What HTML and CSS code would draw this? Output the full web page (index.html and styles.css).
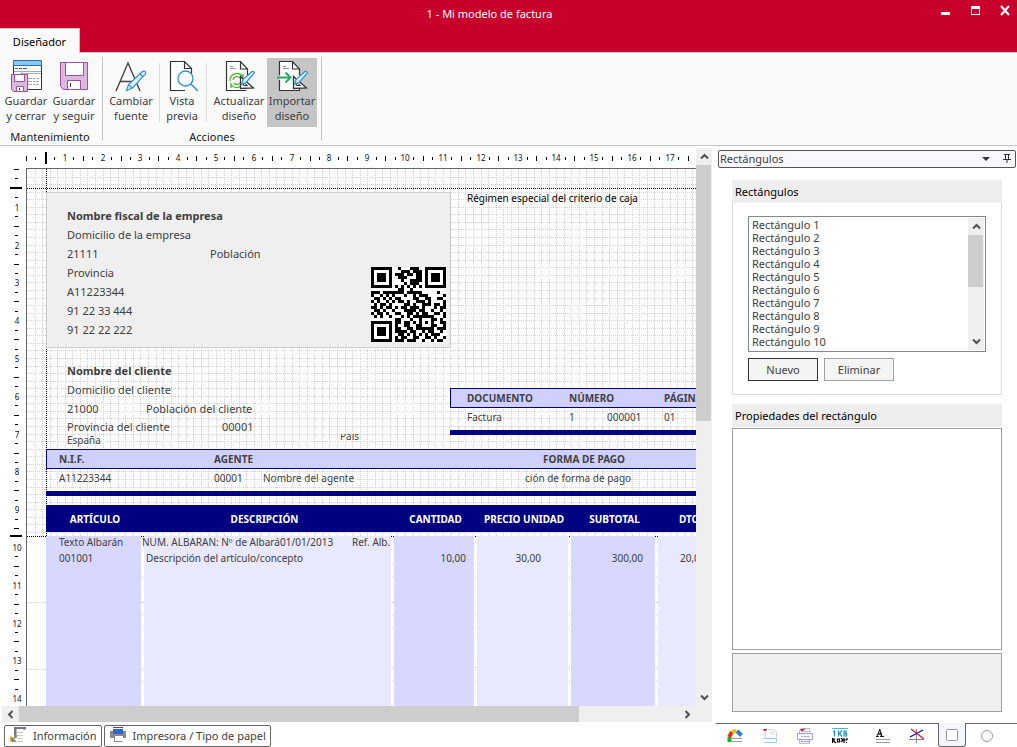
FILE: index.html
```html
<!DOCTYPE html>
<html lang="es">
<head>
<meta charset="utf-8">
<title>1 - Mi modelo de factura</title>
<link rel="stylesheet" href="styles.css">
</head>
<body>
<div class="app">
  <header class="titlebar">
    <h1 class="title">1 - Mi modelo de factura</h1>
    <div class="window-controls">
      <button type="button" aria-label="Minimizar"><svg width="16" height="20"><path d="M4 13.500h9" stroke="#fff" stroke-width="3"/></svg></button>
      <button type="button" aria-label="Maximizar"><svg width="16" height="20"><path d="M4 6h9v9H4z M5 9v5h7V9z" fill="#fff" fill-rule="evenodd"/></svg></button>
      <button type="button" aria-label="Cerrar"><svg width="16" height="20"><path d="M4 6l8 9M12 6l-8 9" stroke="#fff" stroke-width="2"/></svg></button>
    </div>
  </header>
  <nav class="tabs"><a class="tab" href="#ribbon">Diseñador</a></nav>

  <section class="ribbon" id="ribbon">
    <div class="group group-maint">
      <div class="tools">
        <button type="button" class="tool">
          <svg width="32" height="32" viewBox="0 0 32 32" fill="none">
            <path d="M3.500 1.500h28v28h-28z" fill="#fff" stroke="#333"/>
            <path d="M3.500 0.500h28v5h-28z" fill="#92c5ec" stroke="#1b75bc"/>
            <path d="M5 8.500h3M9 8.500h3M13 8.500h4" stroke="#555"/>
            <path d="M4 11.500h27M11.500 11v4M11 13.500h20M18 18.500h4M23 18.500h2M26 18.500h3M18 21.500h4M23 21.500h2M26 21.500h3M18 24.500h4M23 24.500h2M26 24.500h3" stroke="#aaa"/>
            <path d="M1.500 14.500h16v17h-14l-2-2z" fill="#dcb8dc" stroke="#9c4f9f"/>
            <path d="M4.500 14.500h10v7h-10zM6.500 26.500h7v5h-7z" fill="#fff" stroke="#9c4f9f"/>
            <path d="M9.500 28v2" stroke="#333"/>
          </svg>
          <span>Guardar<br>y cerrar</span>
        </button>
        <button type="button" class="tool">
          <svg width="32" height="32" viewBox="0 0 32 32" fill="none">
            <path d="M2.500 2.500h27v27h-24l-3-3z" fill="#dcb8dc" stroke="#9c4f9f"/>
            <path d="M7.500 2.500h18v13h-18zM9.500 20.500h13v9h-13z" fill="#fff" stroke="#9c4f9f"/>
            <path d="M12.500 23v4" stroke="#333"/>
          </svg>
          <span>Guardar<br>y seguir</span>
        </button>
      </div>
      <h2 class="caption">Mantenimiento</h2>
    </div>
    <div class="group group-actions">
      <div class="tools">
        <button type="button" class="tool">
          <svg width="32" height="32" viewBox="0 0 32 32" fill="none">
            <path d="M1 31L13 3l12 28M5 21.500h17" stroke="#444" stroke-width="1.400"/>
            <path d="M27.500 11.500l-14 13-2 6 6-2.500 13-14a2 2 0 0 0-3-2.500zM13.500 24.500l3.500 3.500M25 14l3 3" fill="#dff0fb" stroke="#3092d2" stroke-width="1.200"/>
          </svg>
          <span>Cambiar<br>fuente</span>
        </button>
        <i class="rule"></i>
        <button type="button" class="tool tool-narrow">
          <svg width="32" height="32" viewBox="0 0 32 32" fill="none">
            <path d="M19 30.500H4.500v-29h14l7 7v5M18.500 1.500v7h7" fill="#fff" stroke="#333" stroke-width="1.200"/>
            <circle cx="19.500" cy="18.500" r="7.500" fill="#fff" stroke="#3092d2" stroke-width="1.300"/><path d="M25 24l7 7" stroke="#3092d2" stroke-width="1.500"/>
          </svg>
          <span>Vista<br>previa</span>
        </button>
        <i class="rule rule-late"></i>
        <button type="button" class="tool tool-wide">
          <svg width="32" height="32" viewBox="0 0 32 32" fill="none">
            <path d="M3.500 1.500h14l7 7.500v21.500h-21z" fill="#fff"/>
            <path d="M24.500 15v-6l-7-7.500h-14v29h20M17.500 1.500v7.500h7" stroke="#333" stroke-width="1.200"/>
            <path d="M7 6.500h3M7 8.500h6" stroke="#999"/>
            <path d="M7 21a7 7 0 0 1 13-4v-3M21 20a7 7 0 0 1-13 4v4M10 20a4 4 0 0 1 7-2M18 22a4 4 0 0 1-7 1" stroke="#58ad3c" stroke-width="1.300"/>
            <path d="M17.500 16.500v12l13-.500z" fill="#fff" stroke="#333" stroke-width="1.300"/><path d="M20.500 22.500v3h4z" stroke="#333"/>
            <path d="M29 11.500l-9 8-1.500 5 4.500-2 8-9a1.500 1.500 0 0 0-2-2z" fill="#dff0fb" stroke="#3092d2" stroke-width="1.300"/>
          </svg>
          <span>Actualizar<br>diseño</span>
        </button>
        <button type="button" class="tool tool-active">
          <svg width="32" height="32" viewBox="0 0 32 32" fill="none">
            <path d="M4 2h12l7 7v21H4z" fill="#fff"/>
            <path d="M3.500 15V1.500h13l7 7.500v6M3.500 20v10.500h20v-2M16.500 1.500v7.500h7" stroke="#333" stroke-width="1.200"/>
            <path d="M7 6.500h3M7 8.500h6" stroke="#999"/>
            <path d="M1 17.500h13M9.500 12.500l5 5-5 5" stroke="#2fa866" stroke-width="2"/>
            <path d="M17.500 16.500v12l13-.500z" fill="#fff" stroke="#333" stroke-width="1.300"/><path d="M20.500 22.500v3h4z" stroke="#333"/>
            <path d="M29 11.500l-9 8-1.500 5 4.500-2 8-9a1.500 1.500 0 0 0-2-2z" fill="#dff0fb" stroke="#3092d2" stroke-width="1.300"/>
          </svg>
          <span>Importar<br>diseño</span>
        </button>
      </div>
      <h2 class="caption">Acciones</h2>
    </div>
  </section>

  <main class="workspace">
    <section class="editor">
      <div class="ruler ruler-h" aria-hidden="true"><svg id="ruler-h" width="100%" height="22"></svg></div>
      <div class="ruler ruler-v" aria-hidden="true"><svg id="ruler-v" width="26" height="100%"></svg></div>
      <div class="paper">
        <svg class="grid" id="grid" width="2400" height="1600"></svg>
        <i class="guide guide-top"></i><i class="guide guide-left"></i><i class="guide guide-detail"></i>
        <div class="company">
          <p class="strong">Nombre fiscal de la empresa</p>
          <p>Domicilio de la empresa</p>
          <p class="pair pair-wide"><span>21111</span><span>Población</span></p>
          <p>Provincia</p>
          <p>A11223344</p>
          <p>91 22 33 444</p>
          <p>91 22 22 222</p>
          <svg class="qr" id="qr" viewBox="0 0 25 25"></svg>
        </div>
        <p class="regime">Régimen especial del criterio de caja</p>
        <div class="client">
          <p class="strong">Nombre del cliente</p>
          <p>Domicilio del cliente</p>
          <p class="pair pair-town"><span>21000</span><span>Población del cliente</span></p>
          <p class="pair pair-code"><span>Provincia del cliente</span><span>00001</span></p>
          <p class="country">España</p>
        </div>
        <p class="country-label"><span>País</span></p>
        <table class="strip strip-doc">
          <colgroup><col class="c119"><col class="c38"><col class="c57"><col class="c119"></colgroup>
          <thead><tr><th>DOCUMENTO</th><th colspan="2">NÚMERO</th><th>PÁGINA</th></tr></thead>
          <tbody><tr><td>Factura</td><td>1</td><td>000001</td><td>01</td></tr></tbody>
        </table>
        <table class="strip strip-agent">
          <colgroup><col class="c168"><col class="c49"><col class="c262"><col class="c400"></colgroup>
          <thead><tr><th>N.I.F.</th><th colspan="2">AGENTE</th><th class="payment">FORMA DE PAGO</th></tr></thead>
          <tbody><tr><td>A11223344</td><td>00001</td><td>Nombre del agente</td><td>ción de forma de pago</td></tr></tbody>
        </table>
        <table class="items">
          <colgroup><col class="c98"><col class="c250"><col class="c83"><col class="c94"><col class="c87"><col class="c90"></colgroup>
          <thead><tr><th>ARTÍCULO</th><th class="description">DESCRIPCIÓN</th><th>CANTIDAD</th><th>PRECIO UNIDAD</th><th>SUBTOTAL</th><th class="discount">DTO. %</th></tr></thead>
          <tbody>
            <tr class="first"><td>Texto Albarán</td><td class="note"><div><span>NUM. ALBARAN: Nº de Albará</span><span>01/01/2013</span><span>Ref. Alb.</span></div></td><td></td><td></td><td></td><td></td></tr>
            <tr class="second"><td>001001</td><td>Descripción del artículo/concepto</td><td class="num">10,00</td><td class="num price">30,00</td><td class="num subtotal">300,00</td><td class="rate">20,00</td></tr>
            <tr class="rest"><td></td><td></td><td></td><td></td><td></td><td></td></tr>
          </tbody>
        </table>
      </div>
      <div class="vscroll">
        <button type="button" aria-label="Subir"><svg width="9" height="7"><path d="M1 5.500L4.500 2 8 5.500" fill="none" stroke="#505050" stroke-width="2"/></svg></button>
        <i class="thumb"></i>
        <button type="button" aria-label="Bajar"><svg width="9" height="7"><path d="M1 1.500L4.500 5 8 1.500" fill="none" stroke="#505050" stroke-width="2"/></svg></button>
      </div>
      <div class="hscroll">
        <button type="button" aria-label="Izquierda"><svg width="7" height="9"><path d="M5.500 1L2 4.500 5.500 8" fill="none" stroke="#505050" stroke-width="2"/></svg></button>
        <i class="thumb"></i>
        <button type="button" aria-label="Derecha"><svg width="7" height="9"><path d="M1.500 1L5 4.500 1.500 8" fill="none" stroke="#505050" stroke-width="2"/></svg></button>
      </div>
      <div class="docbar">
        <button type="button" class="dock">
          <svg width="16" height="16" fill="none"><path d="M4 0h12v2.500h-3V2H6.500v9H4z" fill="#777"/><path d="M7 5.500h6M7 8.500h6M7 11.500h6M7 14.500h6" stroke="#ccc"/><path d="M0 15V8.500l3 3L6 8l1 1-3.500 4 4 2z" fill="#f5b83d"/><path d="M2 14l5-5.500M2 10v4h4" stroke="#3a66a5"/></svg>
          Información
        </button>
        <button type="button" class="dock">
          <svg width="16" height="16" fill="none"><path d="M3 0.500h10" stroke="#555"/><path d="M0 4h16v7H0z" fill="#888"/><path d="M3 2h10v5H3z" fill="#2f63d0"/><path d="M4 9h9v5H4z" fill="#fff"/><path d="M4.500 9v5.500h8" stroke="#888"/></svg>
          Impresora / Tipo de papel
        </button>
      </div>
    </section>

    <aside class="panel">
      <div class="panel-head">
        <span>Rectángulos</span>
        <button type="button" aria-label="Opciones"><svg width="8" height="4"><path d="M0 0h8L4 4z" fill="#333"/></svg></button>
        <button type="button" aria-label="Fijar"><svg width="8" height="9" fill="none"><path d="M1 .500h6M2.500 0v5.500M5.500 0v5.500M0 5.500h8M4 5v4" stroke="#333"/><path d="M5 1h1v4H5z" fill="#333"/></svg></button>
      </div>
      <div class="panel-body">
        <section class="box">
          <h2 class="box-title"><label for="rects">Rectángulos</label></h2>
          <div class="box-content">
            <div class="list">
              <select id="rects" size="10">
                <option>Rectángulo 1</option><option>Rectángulo 2</option><option>Rectángulo 3</option><option>Rectángulo 4</option><option>Rectángulo 5</option><option>Rectángulo 6</option><option>Rectángulo 7</option><option>Rectángulo 8</option><option>Rectángulo 9</option><option>Rectángulo 10</option>
              </select>
              <div class="vscroll list-scroll">
                <button type="button" aria-label="Subir lista"><svg width="9" height="7"><path d="M1 5.500L4.500 2 8 5.500" fill="none" stroke="#505050" stroke-width="2"/></svg></button>
                <i class="thumb"></i>
                <button type="button" aria-label="Bajar lista"><svg width="9" height="7"><path d="M1 1.500L4.500 5 8 1.500" fill="none" stroke="#505050" stroke-width="2"/></svg></button>
              </div>
            </div>
            <div class="actions">
              <button type="button" class="btn btn-default">Nuevo</button>
              <button type="button" class="btn">Eliminar</button>
            </div>
          </div>
        </section>
        <section class="props">
          <h2 class="box-title">Propiedades del rectángulo</h2>
          <div class="prop-grid"></div>
          <div class="prop-help"></div>
        </section>
      </div>
      <nav class="panel-tabs">
        <button type="button" aria-label="Campos"><svg width="16" height="16" fill="none"><path d="M2.500 14V9" stroke="#10b020" stroke-width="4"/><path d="M2 9l3-5" stroke="#e03010" stroke-width="4"/><path d="M5 3.500l4.500-.5" stroke="#f0c020" stroke-width="4"/><path d="M10 3l4.500 4.500" stroke="#2f7fd0" stroke-width="4"/><path d="M5 10.500h10M5 13.500h10" stroke="#999"/></svg></button>
        <button type="button" aria-label="Textos"><svg width="16" height="16" fill="none"><path d="M1 1h3v2h-2z" fill="#d22"/><path d="M3 2l2-1" stroke="#22d"/><path d="M3.500 3v7M6 1.500h6l2.500 3V10M7 4h5M8 6h5" stroke="#d4d4d4"/><path d="M.500 10.500h14v4H2" stroke="#a8c8ee"/></svg></button>
        <button type="button" aria-label="Secciones"><svg width="16" height="16" fill="none"><path d="M2.500 5V2.500L4 .500h9v4M2.500 11v4.500h10V11M4 3.500h9M4 8.500h9" stroke="#bbb"/><path d="M3 1h3v2H4z" fill="#d22"/><path d="M6 2l2-1" stroke="#22d"/><path d="M.500 5.500h15v6H.500z" stroke="#9a9af8"/><path d="M4 13.500h9" stroke="#88f" stroke-dasharray="2 1"/></svg></button>
        <button type="button" aria-label="Imágenes"><svg width="16" height="16" fill="none"><path d="M0 .500h16" stroke="#3cc0e8"/><path d="M1 4l1.500-1v5.500M6.500 2.500v6M10 2.500L7.500 5.500 10 8.500M12 3v5h2.500V5.500H12h2V3z" stroke="#2090c8" stroke-width="1.200"/><path d="M.500 10v5M0 11h2.500l-1 2L4 15M5.500 11v3h2v-3zM9 10l2 2-2 2M12 10v5M12 12h3M15 10v2M14 14.500h1" stroke="#000" stroke-width="1.200"/></svg></button>
        <button type="button" aria-label="Etiquetas"><svg width="16" height="16" fill="none"><path d="M2 8.500h3M6 8.500h4M3 8L5.500 2" stroke="#222"/><path d="M5.500 1l2.500 8M4 6h4" stroke="#222" stroke-width="1.500"/><path d="M2 11.500h14M2 14.500h14" stroke="#999"/></svg></button>
        <button type="button" aria-label="Líneas"><svg width="16" height="16" fill="none"><path d="M0 11.500h15M7.500 1v14" stroke="#888"/><path d="M1 9L14 2" stroke="#00f" stroke-width="1.200"/><path d="M2 1l13 10" stroke="#e01020" stroke-width="1.200"/></svg></button>
        <button type="button" aria-label="Rectángulos" class="current"><svg width="12" height="12"><rect x=".500" y=".500" width="11" height="11" rx="1" fill="#fff" stroke="#999"/></svg></button>
        <button type="button" aria-label="Elipses"><svg width="12" height="12"><circle cx="6" cy="6" r="5.500" fill="#fff" stroke="#999"/></svg></button>
      </nav>
    </aside>
  </main>
</div>
<script src="app.js"></script>
</body>
</html>
```
FILE: styles.css
```css
* { box-sizing: border-box; }
body, h1, h2, p { margin: 0; }
body { font: 11px/15px "Noto Sans", sans-serif; color: #404040; background: #fff; }
h1, h2 { font-size: 11px; font-weight: 400; }
button { font: inherit; color: inherit; border: 0; padding: 0; background: none; }
svg { display: block; }
i { font-style: normal; }

.app { display: flex; flex-direction: column; height: 100vh; overflow: hidden; }
.titlebar { display: flex; height: 28px; background: #c8002c; color: #fff; flex: none; }
.title { flex: 1; text-align: center; line-height: 28px; padding-left: 52px; }
.window-controls { display: flex; width: 90px; align-items: flex-start; }
.window-controls button { width: 30px; display: flex; justify-content: flex-end; padding-right: 4px; }
.tabs { display: flex; height: 25px; background: #c8002c; flex: none; border-bottom: 1px solid #c5c5c5; }
.tab { width: 80px; height: 25px; line-height: 25px; text-align: center; color: #000; text-decoration: none; background: #fafafa; border: solid #c5c5c5; border-width: 1px 1px 0 0; }

.ribbon { display: flex; flex: none; height: 93px; padding: 4px 0; background: #fafafa; border-bottom: 1px solid #c5c5c5; }
.group { border-right: 1px solid #c5c5c5; padding: 1px 4px 0; }
.group-maint { padding-left: 2px; }
.tools { display: flex; height: 69px; }
.tool { width: 48px; height: 69px; padding-top: 2px; display: flex; flex-direction: column; align-items: center; gap: 1px; }
.tool span { white-space: nowrap; }
.tool-narrow { width: 38px; }
.tool-wide { width: 52px; }
.tool-active { background: #c5c5c5; width: 50px; margin-left: 2px; }
.rule { width: 1px; height: 59px; background: #dcdcdc; margin: 5px 3px 0 4px; }
.rule-late { margin: 5px 6px 0 5px; }
.caption { text-align: center; color: #202020; line-height: 20px; }

.workspace { flex: 1; display: flex; min-height: 0; }
.editor { flex: 1; min-width: 0; display: grid; grid-template: 22px minmax(0, 1fr) 16px 25px / 26px minmax(0, 1fr) 16px; padding-right: 4px; }
.ruler { overflow: hidden; }
.ruler-h { grid-area: 1 / 1 / 2 / 3; }
.ruler-v { grid-area: 2 / 1; }
.ruler text { font: 8px "Noto Sans", sans-serif; fill: #101010; text-anchor: middle; }
.ruler rect { fill: #000; }
.paper { grid-area: 2 / 2; position: relative; overflow: hidden; background: #fff; border: solid #666; border-width: 1px 0 0 1px; font-size: 10px; line-height: 13px; white-space: nowrap; }
.grid { position: absolute; inset: 0; }
.grid line { stroke: #d4d4d4; stroke-dasharray: 1 1; shape-rendering: crispEdges; }
.grid .sparse { stroke-dasharray: 1 12; }

.company, .client { position: absolute; left: 19px; font-size: 11px; line-height: 19px; padding-left: 21px; }
.company { top: 23px; width: 405px; height: 156px; padding: 13px 0 0 20px; background: #efefef; border: 1px solid #ccc; }
.client { top: 192px; }
.strong { font-weight: 700; }
.pair { display: grid; }
.pair-wide { grid-template-columns: 143px 1fr; }
.pair-town { grid-template-columns: 79px 1fr; }
.pair-code { grid-template-columns: 155px 1fr; line-height: 17px; }
.country { font-size: 10px; line-height: 11px; }
.qr { position: absolute; right: 4px; bottom: 5px; width: 75px; height: 75px; background: #fff; shape-rendering: crispEdges; }
.regime { position: absolute; left: 440px; top: 23px; color: #000; }
.country-label { position: absolute; left: 313px; top: 265px; height: 9px; overflow: hidden; display: flex; align-items: flex-end; }

table { table-layout: fixed; border-spacing: 0; position: absolute; width: 0; }
th, td { padding: 0; text-align: left; font-weight: 400; }
th { font-weight: 700; }
.c38 { width: 38px; } .c49 { width: 49px; } .c57 { width: 57px; } .c83 { width: 83px; } .c87 { width: 87px; } .c90 { width: 90px; } .c94 { width: 94px; }
.c98 { width: 98px; } .c119 { width: 119px; } .c168 { width: 168px; } .c250 { width: 250px; } .c262 { width: 262px; } .c400 { width: 400px; }
.strip th { height: 20px; background: #d0d0ff; border: solid #000080; border-width: 1px 0; }
.strip th:first-child { border-left-width: 1px; }
.strip td { height: 22px; vertical-align: top; padding-top: 3px; }
.strip-doc { left: 423px; top: 219px; border-bottom: 5px solid #000080; }
.strip-doc th:first-child { padding-left: 16px; }
.strip-doc td:first-child { padding-left: 17px; }
.strip-agent { left: 19px; top: 280px; border-bottom: 5px solid #000080; }
.strip-agent th:first-child { padding-left: 12px; }
.strip-agent td:first-child { padding-left: 13px; }
.strip-agent .payment { padding-left: 18px; }
.items { left: 19px; top: 336px; }
.items th { height: 27px; background: #000080; color: #fff; text-align: center; padding-top: 2px; }
.items .description { padding-right: 9px; }
.items .discount { text-align: left; padding-left: 21px; }
.items td { background: #e8e8ff; background-clip: padding-box; border-right: 3px solid transparent; }
.items td:nth-child(odd) { background-color: #d8d8ff; }
.items td:first-child { padding-left: 13px; }
.items td:nth-child(2) { padding-left: 2px; }
.items td.note { padding-left: 0; }
.note div { display: grid; grid-template-columns: 138px 72px 38px; margin-left: -2px; }
.items .first td { height: 19px; border-top: 4px solid transparent; line-height: 12px; vertical-align: top; }
.items .second td { height: 15px; }
.items .rest td { height: 900px; }
.items .num { text-align: right; padding-right: 8px; }
.items .price { padding-right: 27px; }
.items .subtotal { padding-right: 12px; }
.items .rate { padding-left: 22px; }

.guide { position: absolute; border: 0 dotted #000; }
.guide-top { left: 0; right: 0; top: 19px; border-top-width: 1px; }
.guide-left { left: 19px; top: 0; height: 367px; border-left-width: 1px; }
.guide-detail { left: 0; right: 0; top: 367px; border-top-width: 1px; }

.vscroll { grid-area: 1 / 3 / 3 / 4; background: #efefef; display: flex; flex-direction: column; margin-top: 2px; }
.vscroll button { height: 17px; display: flex; align-items: center; justify-content: center; flex: none; }
.vscroll .thumb { background: #cdcdcd; height: 256px; margin-right: 1px; margin-bottom: auto; }
.hscroll { grid-area: 3 / 1 / 4 / 4; background: #efefef; display: flex; margin-left: 2px; padding-right: 16px; }
.hscroll button { width: 17px; display: flex; align-items: center; justify-content: center; flex: none; }
.hscroll .thumb { background: #cdcdcd; width: 560px; margin-right: auto; }
.docbar { grid-area: 4 / 1 / 5 / 4; display: flex; gap: 2px; padding: 3px 0 0 4px; align-items: flex-start; }
.dock { display: flex; align-items: center; gap: 7px; height: 22px; padding: 0 4px 2px 5px; border: 1px solid #666; border-radius: 2px; }

.panel { width: 301px; display: flex; flex-direction: column; padding-top: 4px; }
.panel-head { display: flex; align-items: center; height: 18px; gap: 13px; margin: 0 1px 0 2px; padding: 0 4px 1px 1px; background: #f8f8fd; border: 1px solid #555; border-radius: 2px; }
.panel-head span { flex: 1; }
.panel-body { flex: 1; min-height: 0; display: flex; flex-direction: column; gap: 9px; padding: 12px 15px 11px 16px; }
.box-title { background: #eee; color: #000; height: 23px; line-height: 23px; padding-left: 3px; }
.box-content { border: 1px solid #dcdcdc; border-top: 0; padding: 13px 15px; }
.list { display: flex; border: 1px solid #828790; height: 136px; padding: 0 1px; }
.list select { flex: 1; min-width: 0; border: 0; outline: 0; padding: 0; overflow: hidden; font: 11px/13px "Noto Sans", sans-serif; color: #404040; background: #fff; height: 134px; }
.list option { padding: 0 2px; height: 13px; min-height: 13px; line-height: 13px; }
.list-scroll { width: 16px; margin: 1px 0; }
.list-scroll .thumb { height: 52px; }
.actions { display: flex; gap: 6px; padding-top: 6px; }
.btn { width: 70px; height: 23px; border: 1px solid #a0a0a0; background: #f4f4f4; }
.btn-default { border-color: #333; }
.props { flex: 1; display: flex; flex-direction: column; min-height: 0; }
.prop-grid { flex: 1; border: 1px solid #a0a0a0; margin: 1px 0 3px; }
.prop-help { height: 59px; border: 1px solid #a0a0a0; background: #efefef; }
.panel-tabs { display: flex; height: 24px; border-top: 1px solid #666; flex: none; padding-left: 5px; }
.panel-tabs button { width: 28px; height: 23px; margin-right: 7px; display: flex; align-items: center; justify-content: center; }
.panel-tabs button:nth-child(4) { margin-right: 14px; }
.panel-tabs .current { margin-top: -1px; height: 24px; background: #f5f5fd; border: 1px solid #666; border-top: 0; border-radius: 0 0 3px 3px; }
```
FILE: app.js
```js
const NS = 'http://www.w3.org/2000/svg';
const CM = 37.8;

function add(parent, name, attrs, text) {
  const el = document.createElementNS(NS, name);
  for (const key in attrs) el.setAttribute(key, attrs[key]);
  if (text !== undefined) el.textContent = text;
  parent.appendChild(el);
}

// Rulers: a number each centimetre, long tick each half, short tick each quarter.
function drawRuler(id, origin, vertical, markers) {
  const svg = document.getElementById(id);
  const box = svg.parentNode;
  const length = (vertical ? box.clientHeight : box.clientWidth) - 6;
  const mid = vertical ? 16 : 12;
  svg.replaceChildren();
  const tick = (pos, size, thick) => {
    const start = mid - Math.floor(size / 2);
    add(svg, 'rect', vertical
      ? { x: start, y: pos, width: size, height: thick }
      : { x: pos, y: start, width: thick, height: size });
  };
  for (let k = 0; origin + k * CM / 4 < length; k++) {
    const pos = Math.round(origin + k * CM / 4);
    if (markers.some(m => Math.abs(m - pos) < 4)) continue;
    if (k % 4 === 0 && k > 0) {
      add(svg, 'text', vertical ? { x: mid + 1, y: pos + 4 } : { x: pos + 1, y: mid + 3 }, k / 4);
    } else {
      tick(pos, k % 2 ? 3 : 5, 1);
    }
  }
  markers.forEach(m => tick(m, 12, 2));
}
function drawRulers() {
  drawRuler('ruler-h', 26, false, [45]);
  drawRuler('ruler-v', 1, true, [19, 367]);
}
drawRulers();
window.addEventListener('resize', drawRulers);

// Dotted grid: dense in the header section, sparse in the detail section.
const grid = document.getElementById('grid');
const DETAIL = 367;
const STEP = CM / 5;
for (let k = 1; k * STEP < 2400; k++) {
  const x = Math.round(k * STEP) + 0.5;
  add(grid, 'line', { x1: x, y1: 0, x2: x, y2: DETAIL });
}
for (let k = 1; k * STEP < DETAIL; k++) {
  const y = Math.round(k * STEP) + 0.5;
  add(grid, 'line', { x1: 0, y1: y, x2: 2400, y2: y });
}
for (let y = 433; y < 1600; y += 67) add(grid, 'line', { x1: 0, y1: y + 0.5, x2: 2400, y2: y + 0.5 });
for (const x of [115, 365, 448, 542, 629]) {
  add(grid, 'line', { class: 'sparse', x1: x + 0.5, y1: DETAIL + 14, x2: x + 0.5, y2: 1600 });
}

// QR symbol of the company.
const QR = [
  '1111111001000111001111111',
  '1000001000111011101000001',
  '1011101011101101101011101',
  '1011101001110001101011101',
  '1011101000100111101011101',
  '1000001000010111001000001',
  '1111111010101010101111111',
  '0000000001100100000000000',
  '1110111111101111100000100',
  '1001010100010010111000001',
  '0110101011000011001100110',
  '1010010101101001110100001',
  '0101101000011010011101101',
  '1101011010110111010001011',
  '0110100100011110110010010',
  '1011010011001101011001101',
  '0101001000101011111110001',
  '0000000011000100100011010',
  '1111111011011010101010011',
  '1000001010011001100011001',
  '1011101011001101111110111',
  '1011101011110110010110010',
  '1011101001101010101011100',
  '1000001010110011001101001',
  '1111111011101110010010110'
];
let d = '';
QR.forEach((row, y) => [...row].forEach((v, x) => { if (v === '1') d += `M${x} ${y}h1v1h-1z`; }));
add(document.getElementById('qr'), 'path', { d });
```
